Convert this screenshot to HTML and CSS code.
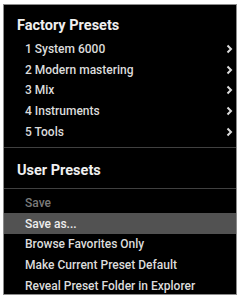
FILE: index.html
```html
<!DOCTYPE html>
<html>
    <head>
        <meta charset="utf-8">
        <title>Presets</title>
        <link rel="stylesheet" href="styles.css">
    </head>
    <body>
        <div class="menu">
            <div class="menu-title first">Factory Presets</div>
            <div class="item sub">1 System 6000<svg class="arrow" width="7" height="10" viewBox="0 0 7 10"><polyline points="1.5,1.5 5,5 1.5,8.5"/></svg></div>
            <div class="item sub">2 Modern mastering<svg class="arrow" width="7" height="10" viewBox="0 0 7 10"><polyline points="1.5,1.5 5,5 1.5,8.5"/></svg></div>
            <div class="item sub">3 Mix<svg class="arrow" width="7" height="10" viewBox="0 0 7 10"><polyline points="1.5,1.5 5,5 1.5,8.5"/></svg></div>
            <div class="item sub">4 Instruments<svg class="arrow" width="7" height="10" viewBox="0 0 7 10"><polyline points="1.5,1.5 5,5 1.5,8.5"/></svg></div>
            <div class="item sub">5 Tools<svg class="arrow" width="7" height="10" viewBox="0 0 7 10"><polyline points="1.5,1.5 5,5 1.5,8.5"/></svg></div>

            <div class="sep"></div>
            <div class="menu-title">User Presets</div>
            <div class="sep last"></div>

            <div class="item disabled">Save</div>
            <div class="item active">Save as...</div>
            <div class="item">Browse Favorites Only</div>
            <div class="item">Make Current Preset Default</div>
            <div class="item">Reveal Preset Folder in Explorer</div>
        </div>
    </body>
</html>
```
FILE: styles.css
```css
body {
    margin: 0;
    background: #fff;
}
.menu {
    margin: 4px 0 0 3px;
    width: 232px;
    height: 289px;
    border: 1px solid #8c8c8c;
    background: #000;
    overflow: hidden;
    font-family: Roboto, "Liberation Sans", sans-serif;
}
.menu-title {
    padding: 12px 0 6px 13px;
    line-height: 22px;
    font-size: 14.5px;
    font-weight: 700;
    color: #f0f0f0;
}
.menu-title.first {
    padding: 10px 0 1.6px 13px;
}
.item {
    display: flex;
    align-items: center;
    justify-content: space-between;
    height: 20.75px;
    padding: 0 3px 0 21px;
    font-size: 12px;
    font-weight: 500;
    color: #dcdcdc;
}
.item.disabled {
    color: #7a7a7a;
}
.item.active {
    background: #525252;
    color: #eee;
}
.arrow {
    fill: none;
    stroke: #dcdcdc;
    stroke-width: 2;
}
.sep {
    height: 1px;
    margin-top: 4.6px;
    background: #404040;
}
.sep.last {
    margin: 0 0 3.6px 0;
}
```
